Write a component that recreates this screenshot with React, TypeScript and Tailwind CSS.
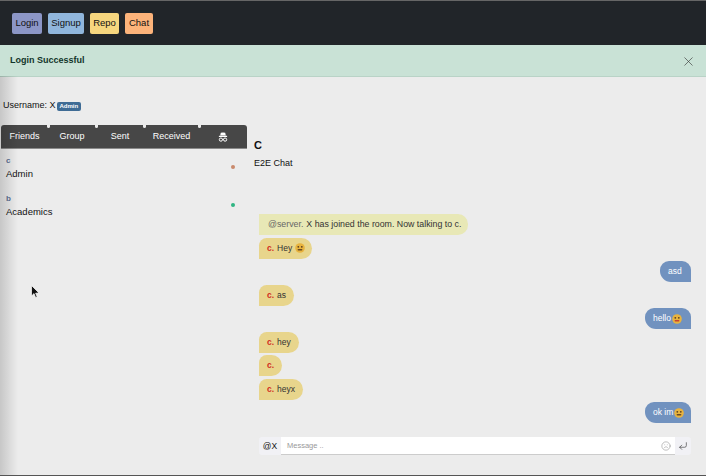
import React from 'react';
import { X, CornerDownLeft, Frown } from 'lucide-react';

const navButtons = [
  { label: 'Login', className: 'w-[30px] bg-[#8c96c6]' },
  { label: 'Signup', className: 'w-[36px] bg-[#90b6dc]' },
  { label: 'Repo', className: 'w-[29px] bg-[#f6d67e]' },
  { label: 'Chat', className: 'w-[28px] bg-[#fcb37a]' },
];

const tabs = [
  { label: 'Friends', className: 'w-[47px]' },
  { label: 'Group', className: 'w-[48px]' },
  { label: 'Sent', className: 'w-[48px]' },
  { label: 'Received', className: 'w-[55px]' },
];

const contacts = [
  { name: 'c', role: 'Admin', dot: 'bg-[#c98a6c]' },
  { name: 'b', role: 'Academics', dot: 'bg-[#2fb582]' },
];

// tiny emoji faces, no colour emoji font on the page
const Face = ({ tongue = false }: { tongue?: boolean }) => (
  <svg width="10" height="10" viewBox="0 0 10 10" className="shrink-0">
    <circle cx="5" cy="5" r="4.8" fill="#e8b33f" />
    <circle cx="3.3" cy="3.8" r="0.9" fill="#5b4020" />
    <circle cx="6.8" cy="3.8" r="0.9" fill="#5b4020" />
    <rect x="2.6" y="6" width="4.8" height="1.5" rx="0.7" fill={tongue ? '#c8402f' : '#6b4a20'} />
  </svg>
);

// hat and glasses of the last tab
const SpyIcon = () => (
  <svg width="10" height="10" viewBox="0 0 10 10" fill="none">
    <path d="M2.2 3.6 L2.8 0.8 Q5 0 7.2 0.8 L7.8 3.6 Z" fill="#fff" />
    <rect x="0.8" y="3.8" width="8.4" height="1.2" rx="0.4" fill="#fff" />
    <circle cx="2.9" cy="7.6" r="1.6" stroke="#fff" strokeWidth="1" />
    <circle cx="7.1" cy="7.6" r="1.6" stroke="#fff" strokeWidth="1" />
    <path d="M4.4 7.4 H5.6" stroke="#fff" strokeWidth="0.8" />
  </svg>
);

const Incoming = ({ text, face, className }: { text?: string; face?: boolean; className: string }) => (
  <div className="flex h-[21px] justify-start">
    <div className={`flex items-center gap-[3px] rounded-tl-[8px] rounded-r-[11px] bg-[#e8d58c] pl-[8px] text-[8.5px] text-[#333] ${className}`}>
      <span className="font-bold text-[#d2301f]">c.</span>
      {text && <span>{text}</span>}
      {face && <Face />}
    </div>
  </div>
);

const Outgoing = ({ text, className, tongue }: { text: string; className: string; tongue?: boolean }) => (
  <div className="flex h-[21px] justify-end">
    <div className={`flex items-center gap-[1px] rounded-t-[9px] rounded-bl-[11px] bg-[#7192bf] pl-[8px] text-[8.5px] text-white ${className}`}>
      <span>{text}</span>
      {tongue !== undefined && <Face tongue={tongue} />}
    </div>
  </div>
);

export default function App() {
  return (
    <div className="relative flex h-[476px] w-[706px] flex-col overflow-hidden border-b border-[#555] bg-[#ececec] font-['Liberation_Sans',Arial,sans-serif] text-[#111]">
      {/* Navbar */}
      <nav className="flex h-[45px] items-center gap-[6px] border-t border-[#666] bg-[#212529] pl-[12px]">
        {navButtons.map((b) => (
          <button key={b.label} className={`flex h-[21px] items-center justify-center rounded-[2px] text-[9.5px] text-[#111] ${b.className}`}>
            {b.label}
          </button>
        ))}
      </nav>

      {/* Alert */}
      <div className="flex h-[32px] items-center justify-between border-b border-[#b9d3c7] bg-[#c9e2d6] pt-[1px] pr-[10px] pl-[10px]">
        <span className="text-[9px] font-bold text-[#12352a]">Login Successful</span>
        <X size={15} strokeWidth={1} className="text-[#333]" />
      </div>

      {/* Username */}
      <div className="mt-[23px] flex h-[12px] items-center gap-[1px] pl-[3px] text-[9px]">
        <span>Username: X</span>
        <span className="rounded-[2px] bg-[#3f6c95] px-[3px] py-[1px] text-[6px] leading-[7px] font-bold text-white">Admin</span>
      </div>

      <div className="mt-[13px] flex flex-1">
        {/* Left column */}
        <div className="ml-[1px] w-[246px]">
          <div className="relative flex h-[24px] items-center rounded-t-[3px] border-b border-[#8a8a8a] bg-[#474747] text-[9px] text-white">
            {tabs.map((t) => (
              <div key={t.label} className={`flex justify-center ${t.className}`}>{t.label}</div>
            ))}
            <div className="flex flex-1 justify-center">
              <SpyIcon />
            </div>
            <span className="absolute top-0 left-[46px] size-[3px] rounded-b-full bg-[#ececec]" />
            <span className="absolute top-0 left-[94px] size-[3px] rounded-b-full bg-[#ececec]" />
            <span className="absolute top-0 left-[142px] size-[3px] rounded-b-full bg-[#ececec]" />
            <span className="absolute top-0 left-[197px] size-[3px] rounded-b-full bg-[#ececec]" />
          </div>
          <div className="mt-[7px] flex flex-col gap-[14px] pr-[12px] pl-[5px]">
            {contacts.map((c) => (
              <div key={c.name} className="flex items-center justify-between">
                <div className="flex flex-col gap-[2px]">
                  <span className="text-[8px] leading-[10px] font-bold text-[#5f7194]">{c.name}</span>
                  <span className="text-[9.5px] leading-[12px]">{c.role}</span>
                </div>
                <span className={`mb-[2px] size-[4px] rounded-full ${c.dot}`} />
              </div>
            ))}
          </div>
        </div>

        {/* Chat column */}
        <div className="ml-[7px] flex flex-1 flex-col pr-[15px]">
          <h2 className="mt-[14px] text-[11px] leading-[13px] font-bold">C</h2>
          <p className="mt-[6px] text-[9px] leading-[11px]">E2E Chat</p>

          <div className="mt-[45px] flex flex-col gap-[2.5px] pl-[5px]">
            <div className="flex h-[21px] justify-start">
              <div className="flex w-[209px] items-center gap-[3px] rounded-r-[10px] bg-[#e8e8b6] pl-[9px] text-[8.8px] text-[#333]">
                <span className="text-[#666]">@server.</span>
                <span>X has joined the room. Now talking to c.</span>
              </div>
            </div>
            <Incoming text="Hey" face className="w-[53px]" />
            <Outgoing text="asd" className="w-[31px]" />
            <Incoming text="as" className="w-[35px]" />
            <Outgoing text="hello" tongue className="w-[46px]" />
            <Incoming text="hey" className="w-[40px]" />
            <Incoming className="w-[23px]" />
            <Incoming text="heyx" className="w-[44px]" />
            <Outgoing text="ok im" tongue={false} className="w-[46px]" />
          </div>

          {/* Composer */}
          <div className="mt-[14px] ml-[5px] flex h-[18px] items-stretch">
            <div className="flex w-[22px] items-center justify-center rounded-l-[3px] bg-[#f1f1f5] text-[8.5px]">@X</div>
            <div className="flex flex-1 items-center justify-between border-b border-[#ccc] bg-white pr-[4px] pl-[6px]">
              <span className="text-[7.5px] text-[#999]">Message ..</span>
              <Frown size={10} strokeWidth={1.5} className="text-[#999]" />
            </div>
            <div className="flex w-[16px] items-center justify-center rounded-r-[3px] bg-[#f1f1f5] pb-[1px]">
              <CornerDownLeft size={10} strokeWidth={1.5} className="text-[#333]" />
            </div>
          </div>
        </div>
      </div>

      {/* Window shadow on the left edge */}
      <div className="pointer-events-none absolute top-[76px] bottom-0 left-0 w-[18px] bg-gradient-to-r from-[#00000028] to-transparent" />

      {/* Mouse cursor */}
      <svg width="9" height="14" viewBox="0 0 9 14" className="absolute top-[285px] left-[31px]">
        <path d="M0.5 0.5 L0.5 11 L3 8.6 L4.6 12.5 L6.2 11.8 L4.6 8.2 L8 8 Z" fill="#111" stroke="#fff" strokeWidth="0.7" />
      </svg>
    </div>
  );
}
